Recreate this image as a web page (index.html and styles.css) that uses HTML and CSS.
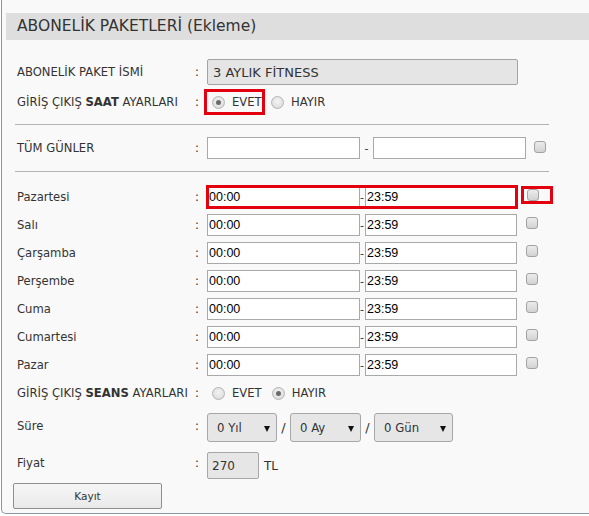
FILE: index.html
```html
<!DOCTYPE html>
<html lang="tr">
<head>
<meta charset="utf-8">
<title>Abonelik Paketleri</title>
<link rel="stylesheet" href="styles.css">
</head>
<body>
<div class="panel">
  <div class="header">ABONELİK PAKETLERİ (Ekleme)</div>
  <form class="form">
    <div class="row row-name">
      <span class="label">ABONELİK PAKET İSMİ</span><span class="colon">:</span>
      <input class="txt name" type="text" value="3 AYLIK FİTNESS" readonly>
    </div>
    <div class="row row-saat">
      <span class="label">GİRİŞ ÇIKIŞ <b>SAAT</b> AYARLARI</span><span class="colon">:</span>
      <span class="radios">
        <span class="mark-radio"><span class="radio checked"></span><span class="rtxt">EVET</span></span>
        <span class="radio"></span><span class="rtxt">HAYIR</span>
      </span>
    </div>
    <div class="sep sep1"></div>
    <div class="row row-all">
      <span class="label">TÜM GÜNLER</span><span class="colon">:</span>
      <input class="txt time" type="text" value="">
      <span class="dash wide">-</span>
      <input class="txt time t2w" type="text" value="">
      <span class="check all-check"></span>
    </div>
    <div class="sep sep2"></div>
    <div class="days">
      <div class="row day first">
        <span class="label">Pazartesi</span><span class="colon">:</span>
        <span class="mark-times"><input class="txt time" type="text" value="00:00"><span class="dash">-</span><input class="txt time t2" type="text" value="23:59"></span>
        <span class="mark-check"><span class="check"></span></span>
      </div>
      <div class="row day">
        <span class="label">Salı</span><span class="colon">:</span>
        <input class="txt time" type="text" value="00:00"><span class="dash">-</span><input class="txt time t2" type="text" value="23:59">
        <span class="check"></span>
      </div>
      <div class="row day">
        <span class="label">Çarşamba</span><span class="colon">:</span>
        <input class="txt time" type="text" value="00:00"><span class="dash">-</span><input class="txt time t2" type="text" value="23:59">
        <span class="check"></span>
      </div>
      <div class="row day">
        <span class="label">Perşembe</span><span class="colon">:</span>
        <input class="txt time" type="text" value="00:00"><span class="dash">-</span><input class="txt time t2" type="text" value="23:59">
        <span class="check"></span>
      </div>
      <div class="row day">
        <span class="label">Cuma</span><span class="colon">:</span>
        <input class="txt time" type="text" value="00:00"><span class="dash">-</span><input class="txt time t2" type="text" value="23:59">
        <span class="check"></span>
      </div>
      <div class="row day">
        <span class="label">Cumartesi</span><span class="colon">:</span>
        <input class="txt time" type="text" value="00:00"><span class="dash">-</span><input class="txt time t2" type="text" value="23:59">
        <span class="check"></span>
      </div>
      <div class="row day">
        <span class="label">Pazar</span><span class="colon">:</span>
        <input class="txt time" type="text" value="00:00"><span class="dash">-</span><input class="txt time t2" type="text" value="23:59">
        <span class="check"></span>
      </div>
    </div>
    <div class="row row-seans">
      <span class="label">GİRİŞ ÇIKIŞ <b>SEANS</b> AYARLARI</span><span class="colon">:</span>
      <span class="radios">
        <span class="radio"></span><span class="rtxt">EVET</span>
        <span class="radio checked"></span><span class="rtxt">HAYIR</span>
      </span>
    </div>
    <div class="row row-sure">
      <span class="label">Süre</span><span class="colon">:</span>
      <span class="sel s-yil">0 Yıl</span><span class="slash">/</span>
      <span class="sel s-ay">0 Ay</span><span class="slash">/</span>
      <span class="sel s-gun">0 Gün</span>
    </div>
    <div class="row row-fiyat">
      <span class="label">Fiyat</span><span class="colon">:</span>
      <input class="txt price" type="text" value="270" readonly><span class="tl">TL</span>
    </div>
    <button class="btn" type="button">Kayıt</button>
  </form>
</div>
</body>
</html>
```
FILE: styles.css
```css
html, body {
  margin: 0;
  padding: 0;
  background: #ffffff;
}
body {
  font-family: "DejaVu Sans", Verdana, sans-serif;
  color: #333333;
  overflow: hidden;
}
.panel {
  margin-left: 1px;
  height: 514px;
  box-sizing: border-box;
  border-left: 1px solid #8a96a2;
  border-bottom: 1px solid #8a96a2;
  border-bottom-left-radius: 5px;
  background: #f9f9f9;
  padding: 13px 0 0 4px;
}
.header {
  height: 27px;
  line-height: 27px;
  background: #dedede;
  font-size: 15.5px;
  color: #333;
  padding-left: 11px;
  white-space: nowrap;
}
.form {
  padding-left: 11px;
  margin: 0;
}
.row {
  display: flex;
  align-items: center;
  height: 28px;
  font-size: 11.6px;
  white-space: nowrap;
}
.label {
  width: 178px;
  flex: none;
}
.label b {
  font-weight: bold;
}
.colon {
  width: 12px;
  flex: none;
}
.txt {
  box-sizing: border-box;
  margin: 0;
  border: 1px solid #a9a9a9;
  background: #fff;
  color: #000;
  outline: none;
  flex: none;
}
.row-name {
  margin-top: 19px;
  height: 26px;
}
.name {
  width: 311px;
  height: 26px;
  background: #e5e5e5;
  border-color: #a3a3a3;
  border-radius: 2px;
  padding: 0 0 0 5px;
  font-family: "DejaVu Sans", Verdana, sans-serif;
  font-size: 13px;
  color: #333;
}
.row-saat {
  margin-top: 3px;
}
.radios {
  display: flex;
  align-items: center;
}
.mark-radio {
  display: flex;
  align-items: center;
  width: 55px;
  height: 20px;
  outline: 3px solid #e3000f;
  margin-right: 9px;
}
.mark-radio .radio {
  margin-left: 5px;
}
.row-seans .radios {
  padding-left: 5px;
}
.radio {
  width: 11px;
  height: 11px;
  border-radius: 50%;
  border: 1px solid #b4b4b4;
  background: radial-gradient(circle at 50% 40%, #f4f4f4 0%, #dcdcdc 80%);
  flex: none;
  position: relative;
}
.radio.checked::after {
  content: "";
  position: absolute;
  left: 3px;
  top: 3px;
  width: 5px;
  height: 5px;
  border-radius: 50%;
  background: #6a6a6a;
}
.rtxt {
  margin-left: 7px;
  margin-right: 10px;
}
.sep {
  height: 1px;
  background: #b3b3b3;
  width: 534px;
  margin-left: -2px;
}
.sep1 {
  margin-top: 8px;
}
.row-all {
  margin-top: 9px;
}
.sep2 {
  margin-top: 9px;
}
.days {
  margin-top: 11px;
}
.time {
  width: 153px;
  height: 22px;
  padding: 0 0 0 1px;
  font-family: "Liberation Sans", Arial, sans-serif;
  font-size: 12.5px;
}
.time.t2 {
  width: 152px;
}
.time.t2w {
  width: 153px;
}
.dash {
  width: 5px;
  text-align: left;
  flex: none;
  font-size: 11px;
}
.dash.wide {
  width: 13px;
  text-align: center;
}
.check {
  display: block;
  width: 12px;
  height: 12px;
  box-sizing: border-box;
  border: 1px solid #a2a2a2;
  border-radius: 3px;
  background: linear-gradient(#ececec, #d3d3d3);
  flex: none;
}
.day .check {
  align-self: flex-start;
  margin-top: 6px;
  margin-left: 9px;
}
.all-check {
  align-self: flex-start;
  margin-top: 7px;
  margin-left: 8px;
}
.mark-times {
  display: flex;
  align-items: center;
  outline: 3px solid #e3000f;
  outline-offset: -2px;
  height: 22px;
}
.day .mark-check {
  display: flex;
  align-self: flex-start;
  margin-top: 6px;
  margin-left: 7px;
  padding: 0 11px 0 3px;
  height: 12px;
  outline: 3px solid #e3000f;
}
.day .mark-check .check {
  margin: 0;
}
.row-sure {
  margin-top: 3px;
  height: 35px;
}
.row-sure .label, .row-sure .colon {
  align-self: flex-start;
  padding-top: 9px;
}
.sel {
  box-sizing: border-box;
  height: 29px;
  border: 1px solid #a7a7a7;
  border-radius: 3px;
  background: #e6e6e6;
  color: #333;
  font-family: "DejaVu Sans Condensed", "DejaVu Sans", sans-serif;
  font-size: 13px;
  display: flex;
  align-items: center;
  padding-left: 9px;
  position: relative;
  flex: none;
}
.sel::after {
  content: "";
  position: absolute;
  right: 6px;
  top: 12px;
  border-left: 3px solid transparent;
  border-right: 3px solid transparent;
  border-top: 6px solid #111;
}
.s-yil { width: 70px; }
.s-ay { width: 71px; }
.s-gun { width: 79px; }
.slash {
  width: 13px;
  text-align: center;
  font-size: 13px;
  flex: none;
}
.row-fiyat {
  margin-top: 6px;
  height: 29px;
}
.row-fiyat .label, .row-fiyat .colon {
  align-self: flex-start;
  padding-top: 5px;
}
.price {
  width: 52px;
  height: 27px;
  background: #e6e6e6;
  border-color: #a7a7a7;
  border-radius: 2px;
  padding-left: 4px;
  font-family: "DejaVu Sans", sans-serif;
  font-size: 12px;
  color: #333;
}
.tl {
  margin-left: 5px;
  font-size: 12px;
}
.btn {
  display: block;
  margin: 3px 0 0 -4px;
  width: 149px;
  height: 26px;
  border: 1px solid #8f8f8f;
  border-radius: 2px;
  background: linear-gradient(#f6f6f6, #e9e9e9);
  font-family: "DejaVu Sans", sans-serif;
  font-size: 10.5px;
  color: #333;
  padding: 0;
}
```
